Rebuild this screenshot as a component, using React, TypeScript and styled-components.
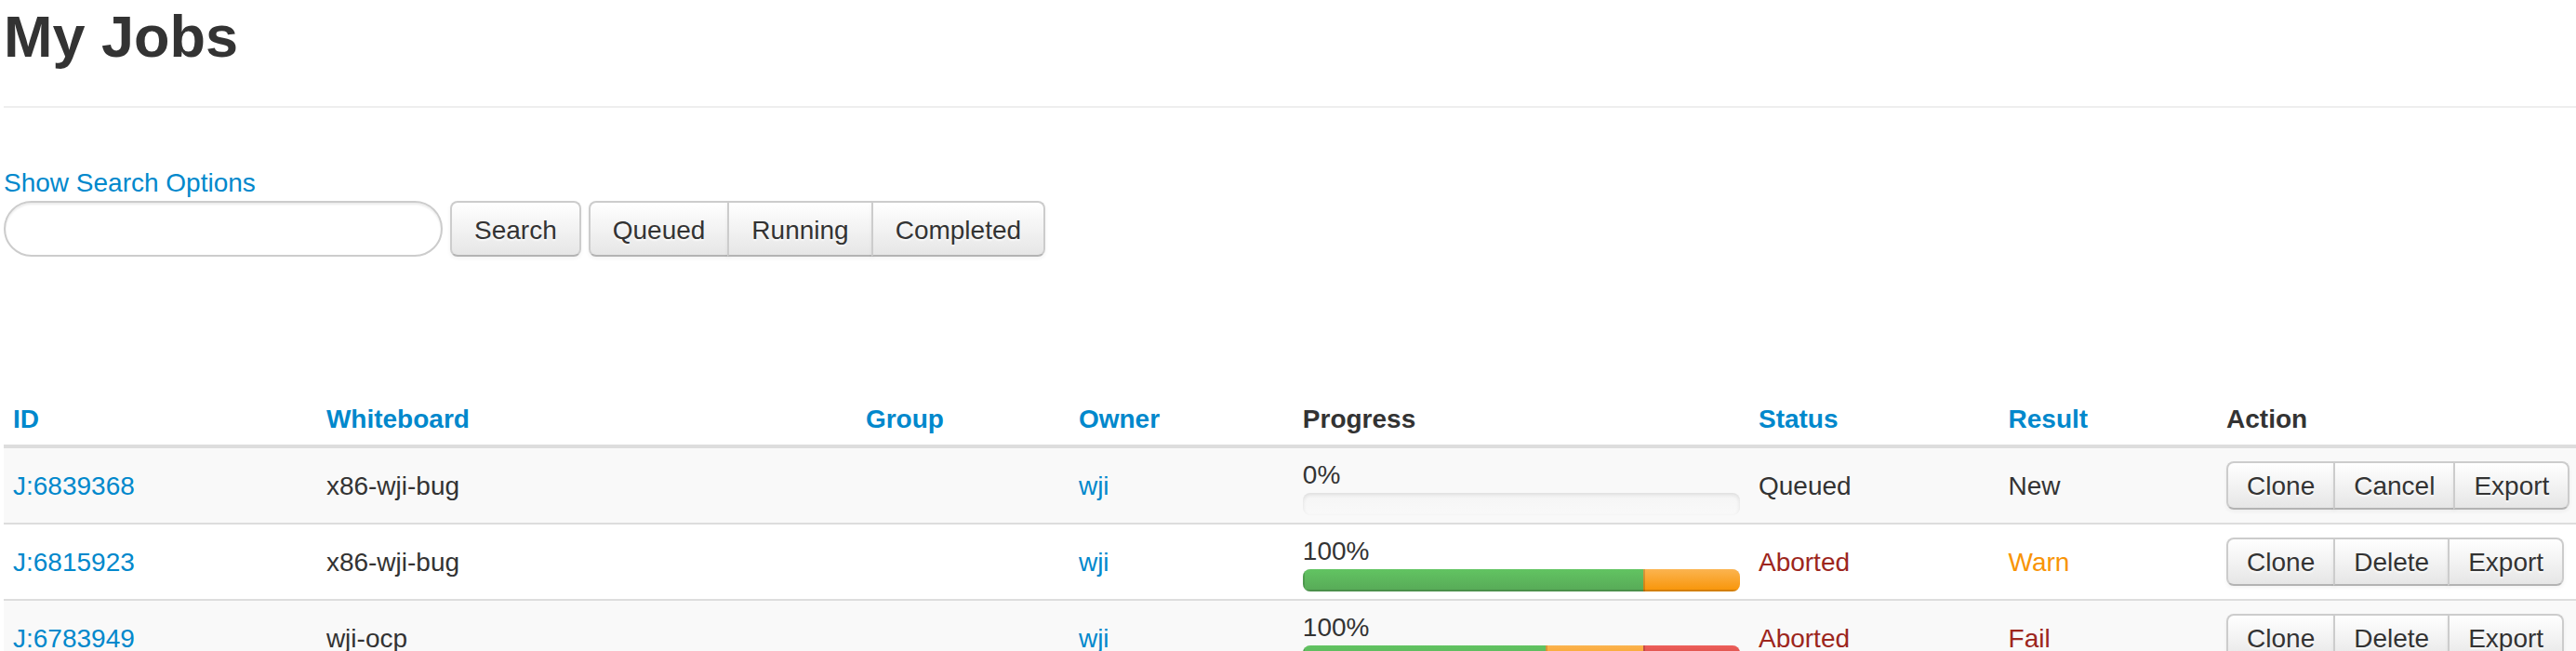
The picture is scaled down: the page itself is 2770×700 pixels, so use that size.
import React from "react";
import styled, { createGlobalStyle } from "styled-components";

const GlobalStyle = createGlobalStyle`
  *, *::before, *::after { box-sizing: border-box; }
  body {
    margin: 0;
    background: #fff;
    color: #333;
    font-family: "Helvetica Neue", "Liberation Sans", Helvetica, Arial, sans-serif;
    font-size: 28px;
    line-height: 40px;
  }
`;

const Page = styled.main`
  padding-left: 4px;
  overflow-x: hidden;
`;

const PageHeader = styled.header`
  padding-bottom: 36px;
  border-bottom: 2px solid #eee;
`;

const Title = styled.h1`
  margin: 0;
  font-size: 63px;
  line-height: 78px;
  font-weight: bold;
`;

const Link = styled.a`
  color: #08c;
  text-decoration: none;
  &:hover { color: #005580; text-decoration: underline; }
`;

const SearchForm = styled.form`
  margin: 62px 0 146px;
  line-height: 38px;
`;

const Toolbar = styled.div`
  display: flex;
  align-items: center;
  gap: 8px;
  line-height: 40px;
`;

const SearchInput = styled.input`
  width: 472px;
  height: 60px;
  padding: 8px 28px;
  border: 2px solid #ccc;
  border-radius: 30px;
  background: #fff;
  color: #555;
  font: inherit;
  box-shadow: inset 0 2px 2px rgba(0, 0, 0, 0.075);
`;

const Button = styled.button<{ $small?: boolean }>`
  margin: 0;
  padding: ${(p) => (p.$small ? "5px 20px 3px" : "10px 24px 6px")};
  border: 2px solid #ccc;
  border-bottom-color: #b3b3b3;
  border-radius: 8px;
  background: linear-gradient(to bottom, #fff, #e6e6e6);
  box-shadow: inset 0 2px 0 rgba(255, 255, 255, 0.2), 0 2px 4px rgba(0, 0, 0, 0.05);
  color: #333;
  font: inherit;
  text-shadow: 0 2px 2px rgba(255, 255, 255, 0.75);
  white-space: nowrap;
  cursor: pointer;
`;

const ButtonGroup = styled.div`
  display: flex;
  ${Button} { border-radius: 0; }
  ${Button} + ${Button} { margin-left: -2px; }
  ${Button}:first-child { border-radius: 8px 0 0 8px; }
  ${Button}:last-child { border-radius: 0 8px 8px 0; }
`;

const Table = styled.table`
  width: 100%;
  table-layout: fixed;
  border-collapse: separate;
  border-spacing: 0;
`;

const Column = styled.col<{ $width?: string }>`
  width: ${(p) => p.$width ?? "auto"};
`;

const HeadCell = styled.th`
  padding: 9px 10px 7px;
  border-bottom: 2px solid #ddd;
  font-weight: bold;
  text-align: left;
`;

const Row = styled.tr`
  &:nth-child(odd) { background: #f9f9f9; }
`;

const Cell = styled.td`
  padding: 8px 10px;
  border-top: 2px solid #ddd;
  vertical-align: middle;
  white-space: nowrap;
`;

const TextCell = styled(Cell)`
  padding: 9px 10px 7px;
`;

const tones = {
  normal: "#333",
  warning: "#f89406",
  danger: "#9d261d",
};

const Outcome = styled.span<{ $tone: keyof typeof tones }>`
  color: ${(p) => tones[p.$tone]};
`;

const Percent = styled.div`
  padding-top: 1px;
  line-height: 39px;
`;

const Progress = styled.div`
  display: flex;
  height: 24px;
  overflow: hidden;
  border-radius: 8px;
  background: linear-gradient(to bottom, #f5f5f5, #f9f9f9);
  box-shadow: inset 0 2px 4px rgba(0, 0, 0, 0.1);
`;

const fills = {
  pass: "#62c462, #57a957",
  warn: "#fbb450, #f89406",
  fail: "#ee5f5b, #c43c35",
};

const Bar = styled.div<{ $kind: keyof typeof fills }>`
  height: 100%;
  background: linear-gradient(to bottom, ${(p) => fills[p.$kind]});
  box-shadow: inset 2px 0 0 rgba(0, 0, 0, 0.15), inset 0 -2px 0 rgba(0, 0, 0, 0.15);
`;

type Tone = keyof typeof tones;
type Kind = keyof typeof fills;

interface Job {
  id: string;
  whiteboard: string;
  owner: string;
  percent: number;
  bars: [Kind, number][];
  status: [string, Tone];
  result: [string, Tone];
  actions: string[];
}

const jobs: Job[] = [
  {
    id: "J:6839368",
    whiteboard: "x86-wji-bug",
    owner: "wji",
    percent: 0,
    bars: [],
    status: ["Queued", "normal"],
    result: ["New", "normal"],
    actions: ["Clone", "Cancel", "Export"],
  },
  {
    id: "J:6815923",
    whiteboard: "x86-wji-bug",
    owner: "wji",
    percent: 100,
    bars: [["pass", 77.8], ["warn", 22.2]],
    status: ["Aborted", "danger"],
    result: ["Warn", "warning"],
    actions: ["Clone", "Delete", "Export"],
  },
  {
    id: "J:6783949",
    whiteboard: "wji-ocp",
    owner: "wji",
    percent: 100,
    bars: [["pass", 55.6], ["warn", 22.2], ["fail", 22.2]],
    status: ["Aborted", "danger"],
    result: ["Fail", "danger"],
    actions: ["Clone", "Delete", "Export"],
  },
];

const columns: { name: string; sortable: boolean; width?: string }[] = [
  { name: "ID", sortable: true, width: "12.18%" },
  { name: "Whiteboard", sortable: true, width: "20.97%" },
  { name: "Group", sortable: true, width: "8.28%" },
  { name: "Owner", sortable: true, width: "8.71%" },
  { name: "Progress", sortable: false, width: "17.72%" },
  { name: "Status", sortable: true, width: "9.71%" },
  { name: "Result", sortable: true, width: "8.48%" },
  { name: "Action", sortable: false },
];

export default function App() {
  return (
    <>
      <GlobalStyle />
      <Page>
        <PageHeader>
          <Title>My Jobs</Title>
        </PageHeader>

        <SearchForm role="search" onSubmit={(e) => e.preventDefault()}>
          <Link href="#search-options">Show Search Options</Link>
          <Toolbar>
            <SearchInput type="text" name="q" aria-label="Search jobs" />
            <Button type="submit">Search</Button>
            <ButtonGroup>
              <Button type="button">Queued</Button>
              <Button type="button">Running</Button>
              <Button type="button">Completed</Button>
            </ButtonGroup>
          </Toolbar>
        </SearchForm>

        <Table>
          <colgroup>
            {columns.map((c) => (
              <Column key={c.name} $width={c.width} />
            ))}
          </colgroup>
          <thead>
            <tr>
              {columns.map((c) => (
                <HeadCell key={c.name} scope="col">
                  {c.sortable ? <Link href={`#sort-${c.name.toLowerCase()}`}>{c.name}</Link> : c.name}
                </HeadCell>
              ))}
            </tr>
          </thead>
          <tbody>
            {jobs.map((job) => (
              <Row key={job.id}>
                <TextCell>
                  <Link href={`#${job.id}`}>{job.id}</Link>
                </TextCell>
                <TextCell>{job.whiteboard}</TextCell>
                <TextCell />
                <TextCell>
                  <Link href={`#${job.owner}`}>{job.owner}</Link>
                </TextCell>
                <Cell>
                  <Percent>{job.percent}%</Percent>
                  <Progress>
                    {job.bars.map(([kind, share]) => (
                      <Bar key={kind} $kind={kind} style={{ width: `${share}%` }} />
                    ))}
                  </Progress>
                </Cell>
                <TextCell>
                  <Outcome $tone={job.status[1]}>{job.status[0]}</Outcome>
                </TextCell>
                <TextCell>
                  <Outcome $tone={job.result[1]}>{job.result[0]}</Outcome>
                </TextCell>
                <Cell>
                  <ButtonGroup>
                    {job.actions.map((a) => (
                      <Button key={a} type="button" $small>
                        {a}
                      </Button>
                    ))}
                  </ButtonGroup>
                </Cell>
              </Row>
            ))}
          </tbody>
        </Table>
      </Page>
    </>
  );
}
